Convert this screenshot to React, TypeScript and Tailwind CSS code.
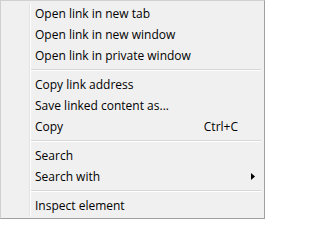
import React from "react";

type Item = { label: string; shortcut?: string; sub?: boolean } | "sep";

const items: Item[] = [
  { label: "Open link in new tab" },
  { label: "Open link in new window" },
  { label: "Open link in private window" },
  "sep",
  { label: "Copy link address" },
  { label: "Save linked content as..." },
  { label: "Copy", shortcut: "Ctrl+C" },
  "sep",
  { label: "Search" },
  { label: "Search with", sub: true },
  "sep",
  { label: "Inspect element" },
];

export default function App() {
  return (
    <div
      className="relative w-[265px] h-[219px] bg-[#f0f0f0] border-t border-l border-t-[#d0d0d0] border-l-[#d0d0d0] border-r border-b border-r-[#a0a0a0] border-b-[#a0a0a0] pt-[2px] pb-[2px] pl-[2px] pr-[2px] text-[12px] text-black"
      style={{ fontFamily: '"Segoe UI", "Open Sans", "Noto Sans", sans-serif' }}
    >
      <div className="absolute left-[28px] top-[3px] bottom-[2px] w-px bg-[#e2e2e2]" />
      <div className="absolute left-[29px] top-[3px] bottom-[2px] w-px bg-white" />
      <div className="flex flex-col">
        {items.map((it, i) =>
          it === "sep" ? (
            <div key={i} className="h-[8px] flex flex-col justify-center pl-[28px] pr-[1px]">
              <div className="h-px bg-[#d7d7d7]" />
              <div className="h-px bg-white" />
            </div>
          ) : (
            <div key={i} className="h-[21px] flex items-center pl-[32px] pr-[7px]">
              <span className="flex-1 whitespace-nowrap leading-none pt-px">{it.label}</span>
              {it.shortcut && (
                <span className="mr-[17px] whitespace-nowrap leading-none pt-px">{it.shortcut}</span>
              )}
              {it.sub && (
                <svg width="4" height="7" viewBox="0 0 4 7">
                  <path d="M0 0 L4 3.5 L0 7 Z" fill="#000" />
                </svg>
              )}
            </div>
          )
        )}
      </div>
    </div>
  );
}
